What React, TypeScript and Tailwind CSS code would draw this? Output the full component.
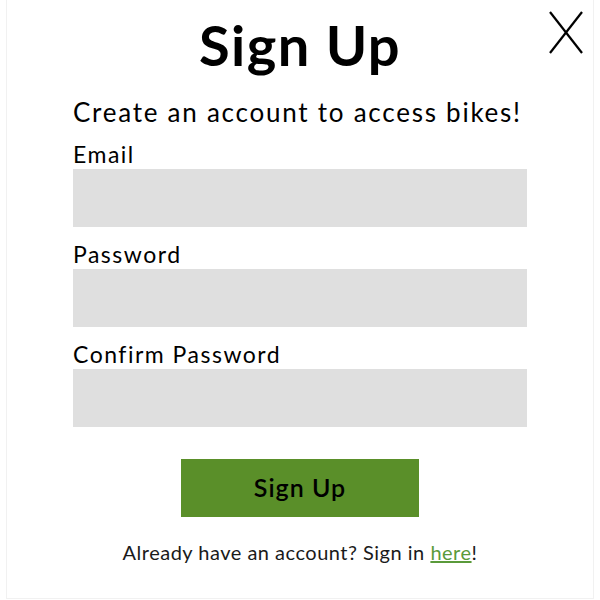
import { useState } from "react";

function CloseIcon() {
  return (
    <svg width="36" height="44" viewBox="0 0 36 44" fill="none" stroke="#000" strokeWidth="2.2">
      <line x1="2" y1="1" x2="34" y2="42" />
      <line x1="34" y1="1" x2="2" y2="42" />
    </svg>
  );
}

function Field({ label, type }: { label: string; type: string }) {
  const [value, setValue] = useState("");
  return (
    <label className="flex flex-col">
      <span className="text-[23px] leading-[30px] tracking-[1.5px] text-black">{label}</span>
      <input
        type={type}
        value={value}
        onChange={(e) => setValue(e.target.value)}
        className="h-[58px] w-full bg-[#dfdfdf] px-3 text-lg outline-none"
      />
    </label>
  );
}

export default function App() {
  return (
    <div className="h-[600px] w-[600px] overflow-hidden bg-white font-['Lato',sans-serif]">
      <div className="relative mx-[6px] h-[599px] border-x border-b border-[#f1f1f1]">
        <button type="button" className="absolute right-[9px] top-[11px]" aria-label="Close">
          <CloseIcon />
        </button>

        <div className="mx-auto flex w-[454px] flex-col pt-[13px]">
          <h1 className="text-center text-[56px] font-bold leading-[64px] tracking-[1.4px] text-black">Sign Up</h1>
          <p className="mt-[18px] whitespace-nowrap text-[26px] leading-[34px] tracking-[1.75px] text-black">
            Create an account to access bikes!
          </p>

          <div className="mt-[10px] flex flex-col gap-[12px]">
            <Field label="Email" type="email" />
            <Field label="Password" type="password" />
            <Field label="Confirm Password" type="password" />
          </div>

          <button
            type="button"
            className="mx-auto mt-[32px] h-[58px] w-[238px] bg-[#5a8f29] text-[25px] font-semibold tracking-[1px] text-black"
          >
            Sign Up
          </button>

          <p className="mt-[20px] text-center text-[20px] tracking-[0.5px] text-[#1a1a1a]">
            Already have an account? Sign in{" "}
            <a href="#" className="text-[#5a9a3a] underline">
              here
            </a>
            !
          </p>
        </div>
      </div>
    </div>
  );
}
